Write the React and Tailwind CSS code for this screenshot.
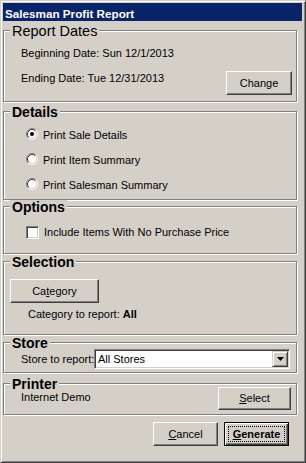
import React from "react";

function Btn({ children, className = "" }) {
  return (
    <div
      className={
        "flex items-center justify-center border border-t-white border-l-white border-r-[#404040] border-b-[#404040] bg-[#d4d0c8] text-[11px] leading-[13px] text-black shadow-[inset_-1px_-1px_0_#808080] " +
        className
      }
    >
      {children}
    </div>
  );
}

function DefBtn({ children, className = "" }) {
  return (
    <div
      className={
        "flex border border-black bg-[#d4d0c8] p-[3px] shadow-[inset_1px_1px_0_#fff,inset_-1px_-1px_0_#404040,inset_-2px_-2px_0_#808080] " +
        className
      }
    >
      <div className="flex flex-1 items-center justify-center border border-dotted border-black text-[11px] font-bold leading-[13px] text-black">
        {children}
      </div>
    </div>
  );
}

function Radio({ checked }) {
  return (
    <svg width="12" height="12" viewBox="0 0 12 12" className="shrink-0">
      <circle cx="6" cy="6" r="4.5" fill="#fff" />
      <path d="M2.11 9.89 A5.5 5.5 0 0 1 9.89 2.11" fill="none" stroke="#808080" strokeWidth="1" />
      <path d="M9.89 2.11 A5.5 5.5 0 0 1 2.11 9.89" fill="none" stroke="#ffffff" strokeWidth="1" />
      <path d="M2.82 9.18 A4.5 4.5 0 0 1 9.18 2.82" fill="none" stroke="#404040" strokeWidth="1" />
      <path d="M9.18 2.82 A4.5 4.5 0 0 1 2.82 9.18" fill="none" stroke="#d4d0c8" strokeWidth="1" />
      {checked && <circle cx="6" cy="6" r="2" fill="#000" />}
    </svg>
  );
}

function Group({ title, bold = true, className = "", children }) {
  return (
    <div
      className={
        "w-[294px] shrink-0 border border-[#808080] shadow-[1px_1px_0_#fff,inset_1px_1px_0_#fff] " +
        className
      }
    >
      <div
        className={
          "-mt-[7px] ml-[6px] w-fit bg-[#d4d0c8] px-[2px] pt-[1px] leading-[12px] text-black " +
          (bold ? "text-[14px] font-bold" : "text-[14.5px] font-normal")
        }
      >
        {title}
      </div>
      {children}
    </div>
  );
}

export default function App() {
  return (
    <div className="flex h-[463px] w-[306px] flex-col border border-t-[#d4d0c8] border-l-[#d4d0c8] border-r-[#404040] border-b-[#404040] bg-[#d4d0c8] pt-[2px] pl-[2px] pr-[3px] pb-[3px] font-['Liberation_Sans',Arial,sans-serif] text-[11px] text-black shadow-[inset_1px_1px_0_#fff,inset_-1px_-1px_0_#808080]">
      <div className="h-[18px] shrink-0 bg-[#0a246a] pl-[2px] pt-[4px] text-[11.7px] font-bold leading-[13px] text-white">
        Salesman Profit Report
      </div>

      <Group title="Report Dates" bold={false} className="mt-[9px] h-[72px]">
        <div className="mt-[10px] pl-[17px] leading-[13px]">Beginning Date: Sun 12/1/2013</div>
        <div className="mt-[11px] flex items-start justify-between pl-[17px] pr-[4px]">
          <span className="mt-[1px] leading-[13px]">Ending Date: Tue 12/31/2013</span>
          <Btn className="h-[24px] w-[66px]">Change</Btn>
        </div>
      </Group>

      <Group title="Details" className="mt-[9px] h-[89px]">
        <div className="mt-[10px] flex flex-col gap-[13px] pl-[22px]">
          <div className="flex h-[12px] items-start gap-[5px]">
            <Radio checked />
            <span className="mt-[1px] leading-[12px]">Print Sale Details</span>
          </div>
          <div className="flex h-[12px] items-start gap-[5px]">
            <Radio />
            <span className="mt-[1px] leading-[12px]">Print Item Summary</span>
          </div>
          <div className="flex h-[12px] items-start gap-[5px]">
            <Radio />
            <span className="mt-[1px] leading-[12px]">Print Salesman Summary</span>
          </div>
        </div>
      </Group>

      <Group title="Options" className="mt-[6px] h-[48px]">
        <div className="mt-[13px] flex items-start gap-[5px] pl-[22px]">
          <div className="h-[13px] w-[13px] shrink-0 border border-t-[#808080] border-l-[#808080] border-r-white border-b-white bg-white shadow-[inset_1px_1px_0_#404040,inset_-1px_-1px_0_#d4d0c8]" />
          <span className="leading-[13px]">Include Items With No Purchase Price</span>
        </div>
      </Group>

      <Group title="Selection" className="mt-[7px] h-[74px]">
        <Btn className="ml-[6px] mt-[11px] h-[24px] w-[89px]">
          <span>
            Ca<span className="underline">t</span>egory
          </span>
        </Btn>
        <div className="mt-[5px] pl-[24px] leading-[13px]">
          Category to report: <span className="font-bold">All</span>
        </div>
      </Group>

      <Group title="Store" className="mt-[7px] h-[31px]">
        <div className="flex items-start pl-[17px]">
          <span className="mt-[4px] w-[73px] shrink-0 whitespace-nowrap leading-[13px]">Store to report:</span>
          <div className="flex h-[20px] w-[196px] border border-t-[#808080] border-l-[#808080] border-r-white border-b-white bg-white p-[1px] shadow-[inset_1px_1px_0_#404040,inset_-1px_-1px_0_#d4d0c8]">
            <span className="flex-1 pl-[2px] leading-[16px]">All Stores</span>
            <div className="flex h-[16px] w-[16px] items-center justify-center border border-t-[#d4d0c8] border-l-[#d4d0c8] border-r-[#404040] border-b-[#404040] bg-[#d4d0c8] shadow-[inset_1px_1px_0_#fff,inset_-1px_-1px_0_#808080]">
              <svg width="7" height="4" viewBox="0 0 7 4">
                <path d="M0 0 H7 L3.5 4 Z" fill="#000" />
              </svg>
            </div>
          </div>
        </div>
      </Group>

      <Group title="Printer" className="mt-[10px] h-[32px]">
        <div className="-mt-[3px] flex items-start justify-between pl-[17px] pr-[5px]">
          <span className="mt-[4px] leading-[13px]">Internet Demo</span>
          <Btn className="h-[23px] w-[73px]">
            <span>
              <span className="underline">S</span>elect
            </span>
          </Btn>
        </div>
      </Group>

      <div className="mt-[7px] flex justify-end gap-[6px] pr-[13px]">
        <Btn className="h-[24px] w-[65px]">
          <span>
            <span className="underline">C</span>ancel
          </span>
        </Btn>
        <DefBtn className="h-[24px] w-[65px]">
          <span>
            <span className="underline">G</span>enerate
          </span>
        </DefBtn>
      </div>
    </div>
  );
}
